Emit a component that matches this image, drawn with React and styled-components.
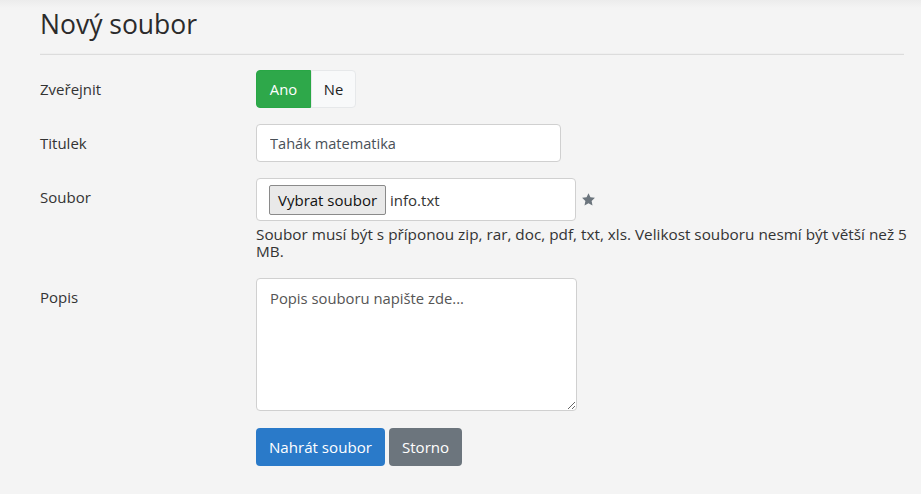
import React from "react";
import styled, { createGlobalStyle } from "styled-components";

const Global = createGlobalStyle`
  html, body { margin: 0; padding: 0; }
  body {
    background: #f4f4f4;
    font-family: "Open Sans", "Noto Sans", sans-serif;
    color: #212529;
  }
`;

const Page = styled.div`
  width: 921px;
  height: 494px;
  box-sizing: border-box;
  padding: 0 17px 0 40px;
  background: linear-gradient(#ececec 0px, #f4f4f4 8px);
  overflow: hidden;
`;

const Heading = styled.h2`
  margin: 0;
  padding-top: 6px;
  font-size: 26.5px;
  font-weight: 400;
  line-height: 36px;
  color: #2b2b2b;
`;

const Rule = styled.hr`
  margin: 12px 0 15px;
  border: 0;
  border-top: 1px solid #dcdcdc;
  box-shadow: 0 -1px 0 #efefef;
`;

const Row = styled.div`
  display: grid;
  grid-template-columns: 216px 1fr;
  margin-bottom: 16px;
`;

const Label = styled.label`
  font-size: 15px;
  line-height: 37px;
  padding-top: 1px;
  color: #333;
`;

const Field = styled.div`
  display: flex;
  flex-direction: column;
  align-items: flex-start;
`;

const Group = styled.div`
  display: inline-flex;
  height: 38px;
`;

const Toggle = styled.button`
  box-sizing: border-box;
  width: ${(p) => p.$w}px;
  font-family: inherit;
  font-size: 14.8px;
  padding: 0;
  border: 1px solid ${(p) => (p.$active ? "#28a745" : "#e6e8ea")};
  background: ${(p) => (p.$active ? "#2ea84a" : "#f8f9fa")};
  color: ${(p) => (p.$active ? "#fff" : "#222")};
  border-radius: ${(p) => (p.$first ? "4px 0 0 4px" : "0 4px 4px 0")};
  cursor: pointer;
`;

const TextInput = styled.input`
  box-sizing: border-box;
  width: ${(p) => p.$w}px;
  height: 38px;
  padding: 0 13px;
  font-family: inherit;
  font-size: 14.6px;
  color: #495057;
  background: #fff;
  border: 1px solid #d0d0d0;
  border-radius: 4px;
  outline: none;
`;

const FileLine = styled.div`
  display: flex;
  align-items: center;
  gap: 5px;
`;

const FileBox = styled.div`
  box-sizing: border-box;
  width: 320px;
  height: 43px;
  display: flex;
  align-items: center;
  padding: 0 12px;
  background: #fff;
  border: 1px solid #d0d0d0;
  border-radius: 4px;
  font-size: 15px;
  color: #333;
`;

const PickButton = styled.span`
  display: inline-flex;
  align-items: center;
  height: 30px;
  box-sizing: border-box;
  padding: 0 8px;
  margin-right: 4px;
  background: #e9e9e9;
  border: 1px solid #8a8a8a;
  border-radius: 2px;
  color: #111;
`;

const Help = styled.div`
  margin-top: 5px;
  padding-bottom: 2px;
  margin-right: -10px;
  font-size: 15.3px;
  line-height: 17px;
  color: #333;
`;

const Area = styled.textarea`
  display: block;
  box-sizing: border-box;
  width: 321px;
  height: 133px;
  padding: 9px 13px;
  font-family: inherit;
  font-size: 14.8px;
  color: #495057;
  background: #fff;
  border: 1px solid #d0d0d0;
  border-radius: 4px;
  outline: none;
  &::placeholder { color: #555; }
`;

const Actions = styled.div`
  display: flex;
  gap: 4px;
  margin-left: 216px;
  padding-top: 1px;
`;

const Btn = styled.button`
  height: 38px;
  padding: 0 13px;
  font-family: inherit;
  font-size: 15.1px;
  border: 0;
  border-radius: 4px;
  color: #fff;
  background: ${(p) => (p.$primary ? "#2a7ac9" : "#6c757d")};
  cursor: pointer;
`;

const Star = () => (
  <svg width="15" height="15" viewBox="0 0 24 24" fill="#6c757d">
    <path d="M12 1.8l3.1 6.6 7.2.9-5.3 5 1.4 7.1L12 17.9l-6.4 3.5L7 14.3l-5.3-5 7.2-.9z" />
  </svg>
);

export default function App() {
  return (
    <>
      <Global />
      <Page>
        <Heading>Nový soubor</Heading>
        <Rule />
        <Row>
          <Label>Zveřejnit</Label>
          <Field>
            <Group>
              <Toggle $active $first $w={55}>Ano</Toggle>
              <Toggle $w={45}>Ne</Toggle>
            </Group>
          </Field>
        </Row>
        <Row>
          <Label>Titulek</Label>
          <Field>
            <TextInput $w={305} defaultValue="Tahák matematika" />
          </Field>
        </Row>
        <Row>
          <Label>Soubor</Label>
          <Field>
            <FileLine>
              <FileBox>
                <PickButton>Vybrat soubor</PickButton>
                info.txt
              </FileBox>
              <Star />
            </FileLine>
            <Help>
              Soubor musí být s příponou zip, rar, doc, pdf, txt, xls. Velikost souboru nesmí být větší než 5 MB.
            </Help>
          </Field>
        </Row>
        <Row>
          <Label>Popis</Label>
          <Field>
            <Area placeholder="Popis souboru napište zde..." />
          </Field>
        </Row>
        <Actions>
          <Btn $primary>Nahrát soubor</Btn>
          <Btn>Storno</Btn>
        </Actions>
      </Page>
    </>
  );
}
